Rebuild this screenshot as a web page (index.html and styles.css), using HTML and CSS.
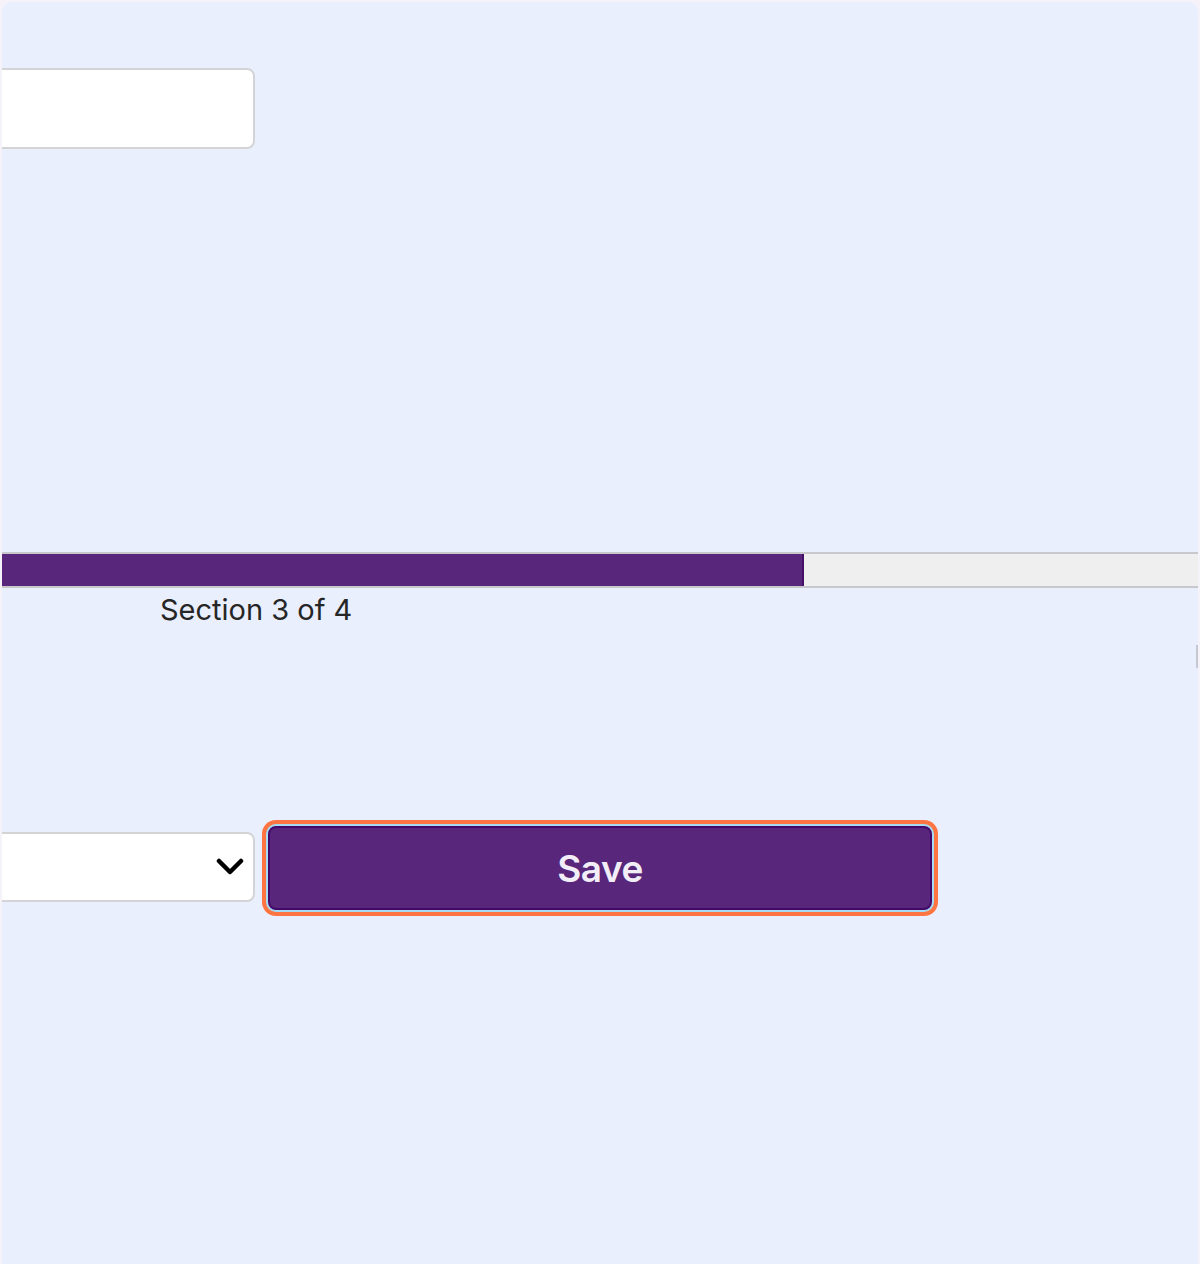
FILE: index.html
```html
<!DOCTYPE html>
<html lang="en">
<head>
<meta charset="utf-8">
<title>Section 3 of 4</title>
<link rel="stylesheet" href="styles.css">
</head>
<body>
<div class="frame">
  <input class="text-input" type="text" aria-label="Answer">
  <div class="progress">
    <div class="progress-fill" style="width: 802px"></div>
  </div>
  <div class="progress-label">Section 3 of 4</div>
  <div class="edge-mark"></div>
  <div class="form-row">
    <div class="select">
      <svg class="chevron" width="28" height="20" viewBox="0 0 28 20" aria-hidden="true">
        <polyline points="3,4 14,15 25,4" fill="none" stroke="#000" stroke-width="4.5" stroke-linecap="round" stroke-linejoin="round"/>
      </svg>
    </div>
    <button class="save-btn" type="button">Save</button>
  </div>
</div>
</body>
</html>
```
FILE: styles.css
```css
html, body {
  margin: 0;
  padding: 0;
}
body {
  background: #f5f2f9;
  font-family: Inter, "Noto Sans", "Liberation Sans", sans-serif;
  width: 1200px;
  height: 1264px;
  overflow: hidden;
}
.frame {
  margin: 2px 2px 0;
  height: 1262px;
  background: #e9effd;
  border-radius: 10px 10px 0 0;
  overflow: hidden;
  display: flex;
  flex-direction: column;
}
.text-input {
  box-sizing: border-box;
  margin: 66px 0 0 -50px;
  width: 303px;
  height: 81px;
  background: #fff;
  border: 2px solid #d4d4d7;
  border-radius: 8px;
  flex: none;
  outline: none;
  padding: 0;
}
.progress {
  box-sizing: border-box;
  margin-top: 403px;
  height: 36px;
  width: 100%;
  background: #efefef;
  border-top: 2px solid #c9c9cd;
  border-bottom: 2px solid #c9c9cd;
  display: flex;
  flex: none;
}
.progress-fill {
  box-sizing: border-box;
  height: 100%;
  background: #58267a;
  border-right: 2px solid #46106a;
}
.progress-label {
  margin: 4px 0 0 158px;
  font-size: 29px;
  line-height: 36px;
  color: #262626;
  flex: none;
}
.edge-mark {
  align-self: flex-end;
  margin-top: 17px;
  width: 2px;
  height: 23px;
  background: #c6c8d2;
  flex: none;
}
.form-row {
  margin: 158px 0 0 -50px;
  display: flex;
  align-items: center;
  gap: 13px;
  flex: none;
}
.select {
  box-sizing: border-box;
  width: 303px;
  height: 70px;
  background: #fff;
  border: 2px solid #d4d4d7;
  border-radius: 8px;
  display: flex;
  align-items: center;
  justify-content: flex-end;
  padding-right: 9px;
  margin-bottom: 2px;
}
.chevron {
  display: block;
}
.save-btn {
  box-sizing: border-box;
  width: 664px;
  height: 84px;
  background: #58267a;
  border: 2px solid #44086a;
  border-radius: 8px;
  box-shadow: 0 0 0 2px #a6dcf2, 0 0 0 6px #ff7542;
  color: #f2eef8;
  font-family: Inter, "Noto Sans", "Liberation Sans", sans-serif;
  font-size: 37px;
  font-weight: 600;
  letter-spacing: -0.5px;
  padding: 0;
  cursor: pointer;
}
```
